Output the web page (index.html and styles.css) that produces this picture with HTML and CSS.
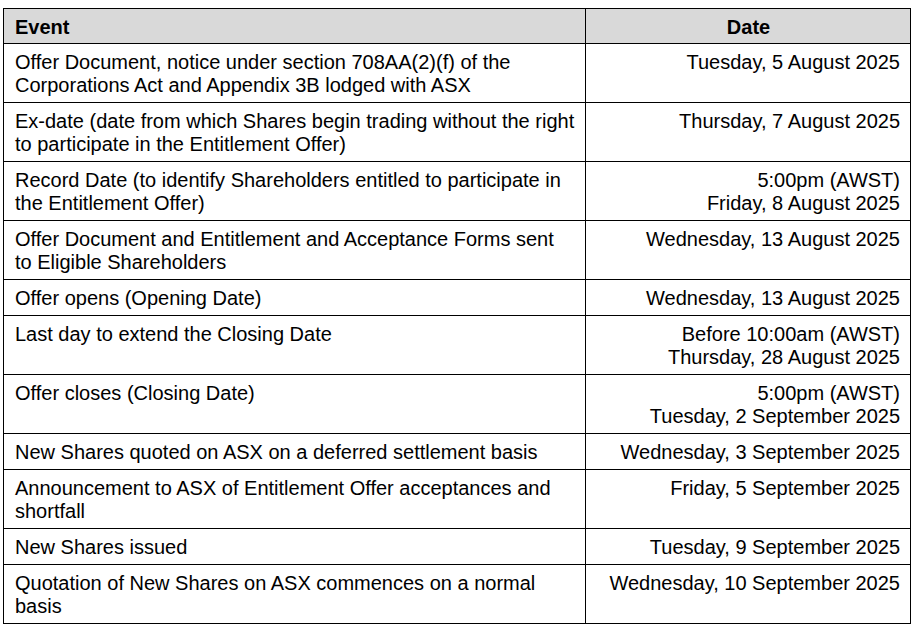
FILE: index.html
```html
<!DOCTYPE html>
<html>
<head>
<meta charset="utf-8">
<link rel="stylesheet" href="styles.css">
</head>
<body>
<table class="timetable">
  <colgroup><col class="c-event"><col class="c-date"></colgroup>
  <thead>
    <tr><th class="h-event">Event</th><th class="h-date">Date</th></tr>
  </thead>
  <tbody>
    <tr><td>Offer Document, notice under section 708AA(2)(f) of the Corporations Act and Appendix 3B lodged with ASX</td><td class="date">Tuesday, 5 August 2025</td></tr>
    <tr><td>Ex-date (date from which Shares begin trading without the right to participate in the Entitlement Offer)</td><td class="date">Thursday, 7 August 2025</td></tr>
    <tr><td>Record Date (to identify Shareholders entitled to participate in the Entitlement Offer)</td><td class="date">5:00pm (AWST)<br>Friday, 8 August 2025</td></tr>
    <tr><td>Offer Document and Entitlement and Acceptance Forms sent to Eligible Shareholders</td><td class="date">Wednesday, 13 August 2025</td></tr>
    <tr><td>Offer opens (Opening Date)</td><td class="date">Wednesday, 13 August 2025</td></tr>
    <tr><td>Last day to extend the Closing Date</td><td class="date">Before 10:00am (AWST)<br>Thursday, 28 August 2025</td></tr>
    <tr><td>Offer closes (Closing Date)</td><td class="date">5:00pm (AWST)<br>Tuesday, 2 September 2025</td></tr>
    <tr><td>New Shares quoted on ASX on a deferred settlement basis</td><td class="date">Wednesday, 3 September 2025</td></tr>
    <tr><td>Announcement to ASX of Entitlement Offer acceptances and shortfall</td><td class="date">Friday, 5 September 2025</td></tr>
    <tr><td>New Shares issued</td><td class="date">Tuesday, 9 September 2025</td></tr>
    <tr><td>Quotation of New Shares on ASX commences on a normal basis</td><td class="date">Wednesday, 10 September 2025</td></tr>
  </tbody>
</table>
</body>
</html>
```
FILE: styles.css
```css
html, body {
  margin: 0;
  padding: 0;
  background: #fff;
}
body {
  padding: 8px 0 0 3px;
  font-family: "Liberation Sans", Arial, sans-serif;
  color: #000;
}
.timetable {
  border-collapse: collapse;
  width: 907px;
  table-layout: fixed;
  font-size: 20px;
  line-height: 23px;
}
.c-event { width: 582px; }
.c-date { width: 325px; }
.timetable th,
.timetable td {
  border: 1px solid #000;
  vertical-align: top;
  padding: 7px 10px 5px 11px;
  text-align: left;
}
.timetable th {
  background: #d9d9d9;
  font-weight: bold;
  padding-top: 7px;
  padding-bottom: 4px;
}
.timetable .h-date { text-align: center; }
.timetable .date { text-align: right; }
```
